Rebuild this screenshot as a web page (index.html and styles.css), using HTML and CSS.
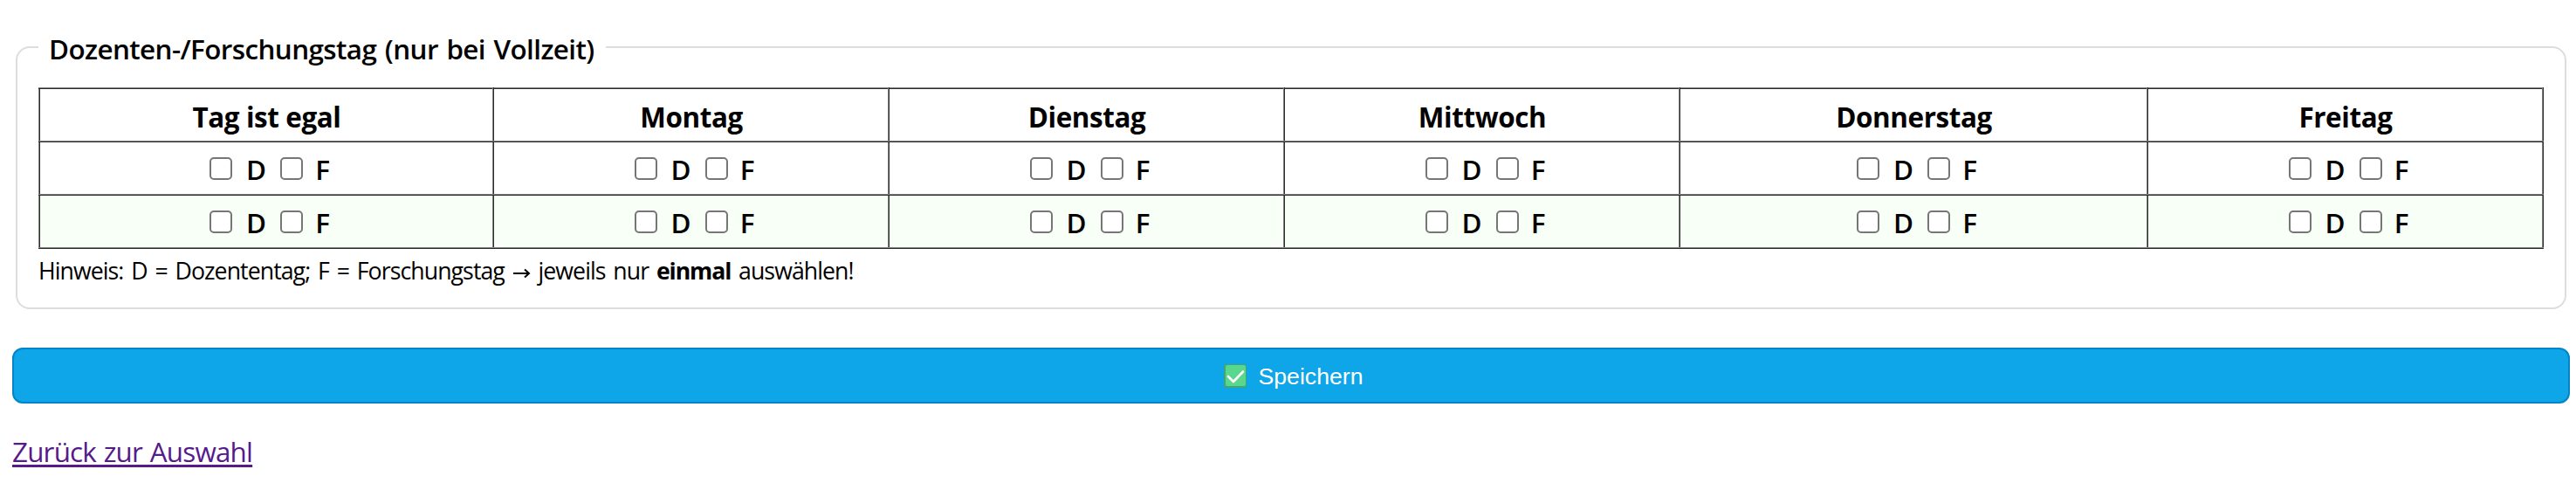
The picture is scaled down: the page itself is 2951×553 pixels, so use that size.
FILE: index.html
```html
<!DOCTYPE html>
<html lang="de">
<head>
<meta charset="utf-8">
<title>Dozenten-/Forschungstag</title>
<link rel="stylesheet" href="styles.css">
</head>
<body>
<form class="form">
<fieldset class="group">
<legend class="legend">Dozenten-/Forschungstag (nur bei Vollzeit)</legend>
<table class="days">
<colgroup><col class="c1"><col class="c2"><col class="c3"><col class="c4"><col class="c5"><col class="c6"></colgroup>
<thead><tr><th>Tag ist egal</th><th>Montag</th><th>Dienstag</th><th>Mittwoch</th><th>Donnerstag</th><th>Freitag</th></tr></thead>
<tbody>
<tr>
<td><div class="pair"><input type="checkbox"><label class="d">D</label><input type="checkbox"><label>F</label></div></td>
<td><div class="pair"><input type="checkbox"><label class="d">D</label><input type="checkbox"><label>F</label></div></td>
<td><div class="pair"><input type="checkbox"><label class="d">D</label><input type="checkbox"><label>F</label></div></td>
<td><div class="pair"><input type="checkbox"><label class="d">D</label><input type="checkbox"><label>F</label></div></td>
<td><div class="pair"><input type="checkbox"><label class="d">D</label><input type="checkbox"><label>F</label></div></td>
<td><div class="pair"><input type="checkbox"><label class="d">D</label><input type="checkbox"><label>F</label></div></td>
</tr>
<tr class="alt">
<td><div class="pair"><input type="checkbox"><label class="d">D</label><input type="checkbox"><label>F</label></div></td>
<td><div class="pair"><input type="checkbox"><label class="d">D</label><input type="checkbox"><label>F</label></div></td>
<td><div class="pair"><input type="checkbox"><label class="d">D</label><input type="checkbox"><label>F</label></div></td>
<td><div class="pair"><input type="checkbox"><label class="d">D</label><input type="checkbox"><label>F</label></div></td>
<td><div class="pair"><input type="checkbox"><label class="d">D</label><input type="checkbox"><label>F</label></div></td>
<td><div class="pair"><input type="checkbox"><label class="d">D</label><input type="checkbox"><label>F</label></div></td>
</tr>
</tbody>
</table>
<p class="hint">Hinweis: D = Dozententag; F = Forschungstag <svg class="arrow" width="21" height="14" viewBox="0 0 21 14"><path d="M1 7H19M14 2.500L19 7L14 11.500" fill="none" stroke="#000" stroke-width="2"/></svg> jeweils nur <b>einmal</b> auswählen!</p>
</fieldset>
<button class="save" type="button"><svg class="check" width="26" height="27" viewBox="0 0 26 27"><rect width="26" height="27" rx="3" fill="#3da873"/><rect x="2" y="1" width="23" height="24" rx="2" fill="#59d78d"/><path d="M5 14L11 20L22 8.500" fill="none" stroke="#fff" stroke-width="2.600" stroke-linecap="round" stroke-linejoin="round"/></svg><span class="save-text">Speichern</span></button>
</form>
<a class="back" href="#">Zurück zur Auswahl</a>
</body>
</html>
```
FILE: styles.css
```css
* { box-sizing: border-box; }
body { margin: 0; padding: 32px 7px 0 14px; background: #fff; color: #000; font: 31.4px/43px "Open Sans", "Noto Sans", sans-serif; overflow: hidden; }
.group { margin: 0 4px; padding: 25px 24px 0; height: 322px; border: 2px solid #ddd; border-radius: 16px; }
.legend { padding: 2px 12px 0; height: 43px; width: 650px; font-weight: 600; letter-spacing: -0.59px; word-spacing: 2px; white-space: nowrap; }
.days { width: 2870px; table-layout: fixed; border-collapse: collapse; }
.c1 { width: 520px; }
.c2, .c3, .c4 { width: 453px; }
.c5 { width: 536px; }
.days th, .days td { height: 61px; padding: 0; border: 2px ridge #808080; text-align: center; }
.days th { padding: 3px 0 0 1px; font-weight: 700; letter-spacing: -0.4px; }
.alt { background: #f7fff7; }
.pair { display: flex; justify-content: center; align-items: center; gap: 14px; padding-left: 8px; font-weight: 600; }
.pair input { appearance: none; width: 26px; height: 26px; margin: 0; border: 2px solid #767676; border-radius: 5px; background: #fff; }
.pair label { padding-top: 1px; }
.pair .d { width: 27px; }
.hint { margin: 5px 0 0; font-size: 26.7px; line-height: 40px; letter-spacing: -0.94px; word-spacing: 2.8px; }
.hint b { letter-spacing: -1.1px; }
.save { display: flex; align-items: center; justify-content: center; gap: 13px; width: 2930px; height: 64px; margin-top: 44px; padding: 0 0 0 6px; border: 2px solid #0284c7; border-radius: 12px; background: #0ea5e9; color: #fff; font: 26.67px "Liberation Sans", Arial, sans-serif; }
.save-text { padding-top: 2px; }
.back { display: inline-block; margin-top: 33px; color: #551a8b; letter-spacing: -0.8px; word-spacing: 1.3px; text-decoration-thickness: 3px; text-underline-offset: 3px; text-decoration-skip-ink: none; }
```
